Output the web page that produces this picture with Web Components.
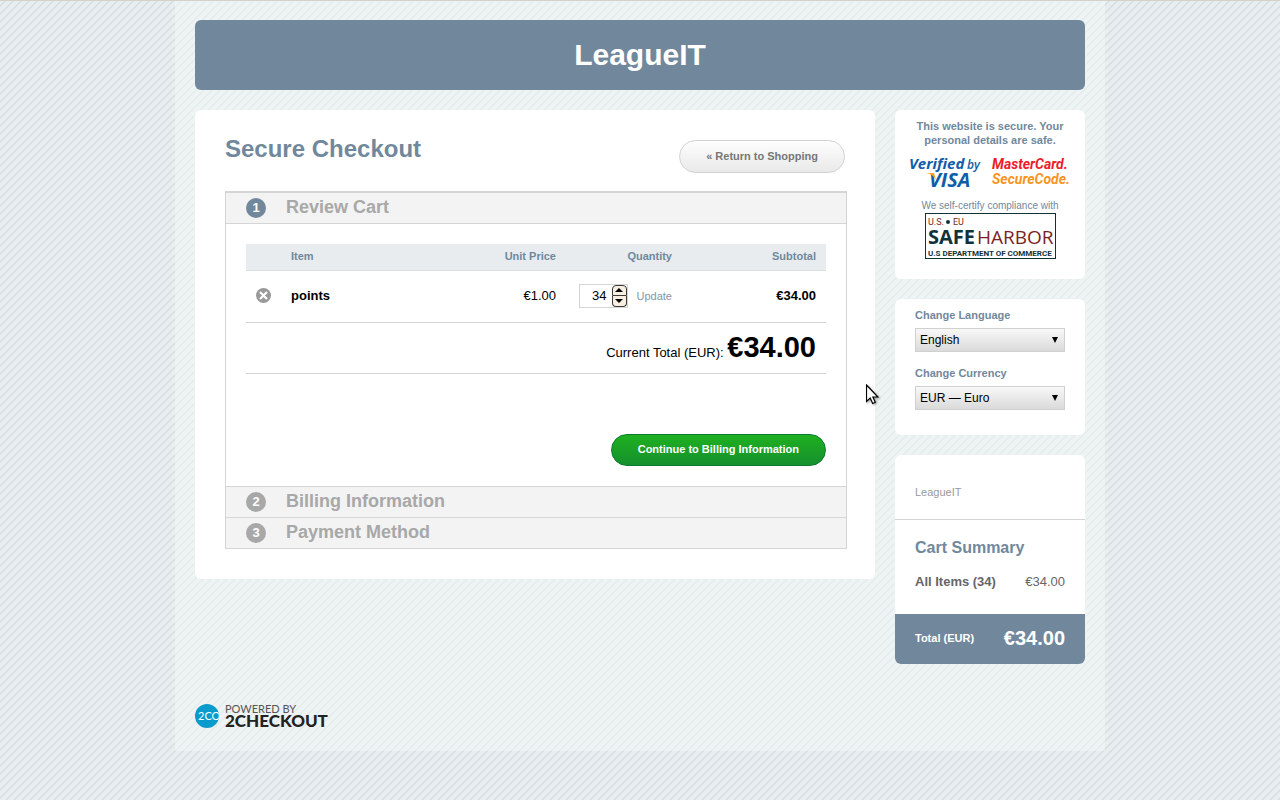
<!DOCTYPE html>
<html lang="en">
<head>
<meta charset="utf-8">
<title>LeagueIT - Secure Checkout</title>
<style>
  :root {
    --brand: #71889c;
    --line: #d4d5d6;
  }

  body {
    margin: 0;
    min-height: 100vh;
    box-sizing: border-box;
    border-top: 1px solid #d5d0c8;
    font: 13px/16px "Liberation Sans", Arial, sans-serif;
    color: #000;
    background: #e8edf0 linear-gradient(135deg,
      transparent 30%, #d5dcdf 34%, #d5dcdf 42%, transparent 46%,
      transparent 80%, #d5dcdf 84%, #d5dcdf 92%, transparent 96%) 0 0 / 8px 8px;
  }
</style>
</head>
<body>
  <checkout-page>
    <site-banner slot="banner">LeagueIT</site-banner>

    <checkout-panel slot="main">
      <checkout-step number="1" label="Review Cart" open>
        <cart-table></cart-table>
        <pill-button kind="primary">Continue to Billing Information</pill-button>
      </checkout-step>
      <checkout-step number="2" label="Billing Information"></checkout-step>
      <checkout-step number="3" label="Payment Method"></checkout-step>
    </checkout-panel>

    <trust-badges slot="side"></trust-badges>
    <locale-picker slot="side"></locale-picker>
    <cart-summary slot="side"></cart-summary>

    <powered-by slot="footer"></powered-by>
  </checkout-page>
  <mouse-pointer></mouse-pointer>

<script>
class CheckoutPage extends HTMLElement {
  constructor() {
    super();
    this.shadowDOM = this.attachShadow({ mode: "open" });
    this.shadowDOM.innerHTML = `
    <style>
      :host {
        display: block;
        box-sizing: border-box;
        max-width: 930px;
        margin: 0 auto;
        padding: 19px 20px 23px;
        background: rgba(244, 250, 247, 0.5);
      }
      .columns {
        display: flex;
        align-items: flex-start;
        gap: 20px;
        margin: 20px 0 40px;
      }
      main {
        flex: 1;
        min-width: 0;
      }
      aside {
        display: flex;
        flex-direction: column;
        gap: 20px;
        width: 190px;
      }
    </style>
    <slot name="banner"></slot>
    <div class="columns">
      <main><slot name="main"></slot></main>
      <aside><slot name="side"></slot></aside>
    </div>
    <slot name="footer"></slot>`;
  }
}

customElements.define("checkout-page", CheckoutPage);

class SiteBanner extends HTMLElement {
  constructor() {
    super();
    this.shadowDOM = this.attachShadow({ mode: "open" });
    this.shadowDOM.innerHTML = `
    <style>
      :host {
        display: block;
        padding: 17px 20px;
        border-radius: 6px;
        background: var(--brand);
        color: #fff;
        text-align: center;
      }
      h1 {
        margin: 0;
        font-size: 30px;
        line-height: 36px;
      }
    </style>
    <h1><slot></slot></h1>`;
  }
}

customElements.define("site-banner", SiteBanner);

class PillButton extends HTMLElement {
  constructor() {
    super();
    this.shadowDOM = this.attachShadow({ mode: "open" });
    this.shadowDOM.innerHTML = `
    <style>
      :host {
        display: block;
      }
      button {
        display: block;
        padding: 8px 26px 9px;
        border: 1px solid #d2d2d2;
        border-radius: 17px;
        background: linear-gradient(#fefefe, #e9e9e9);
        color: #777;
        font: bold 11px/14px "Liberation Sans", Arial, sans-serif;
        white-space: nowrap;
        cursor: pointer;
      }
      :host([kind="primary"]) button {
        padding: 7px 26px 9px;
        border-color: #0b7a30;
        background: linear-gradient(#1fb020, #15902e);
        color: #fff;
      }
    </style>
    <button type="button"><slot></slot></button>`;
  }
}

customElements.define("pill-button", PillButton);

class CheckoutPanel extends HTMLElement {
  constructor() {
    super();
    this.shadowDOM = this.attachShadow({ mode: "open" });
    this.shadowDOM.innerHTML = `
    <style>
      :host {
        display: block;
        padding: 30px;
        border-radius: 6px;
        background: #fff;
      }
      header {
        display: flex;
        justify-content: space-between;
        align-items: flex-start;
        margin-bottom: 18px;
      }
      h2 {
        margin: 0;
        color: var(--brand);
        font-size: 24px;
        line-height: 18px;
      }
      .steps {
        margin-right: -2px;
        border: 1px solid var(--line);
        border-top-width: 2px;
      }
    </style>
    <header>
      <h2>Secure Checkout</h2>
      <pill-button>« Return to Shopping</pill-button>
    </header>
    <div class="steps"><slot></slot></div>`;
  }
}

customElements.define("checkout-panel", CheckoutPanel);

class CheckoutStep extends HTMLElement {
  constructor() {
    super();
    this.shadowDOM = this.attachShadow({ mode: "open" });
  }

  connectedCallback() {
    this.render();
  }

  render() {
    this.shadowDOM.innerHTML = `
    <style>
      :host {
        display: block;
      }
      :host(:not(:first-child)) {
        border-top: 1px solid var(--line);
      }
      h3 {
        display: flex;
        align-items: center;
        gap: 20px;
        height: 30px;
        margin: 0;
        padding: 0 20px;
        background: #f3f3f3;
        color: #a8a8a8;
        font-size: 18px;
        line-height: 26px;
      }
      h3 span:last-child {
        padding-bottom: 2px;
      }
      .number {
        width: 20px;
        border-radius: 50%;
        background: #a8a8a8;
        color: #fff;
        font-size: 13px;
        line-height: 20px;
        text-align: center;
      }
      :host([open]) h3 {
        border-bottom: 1px solid var(--line);
      }
      :host([open]) .number {
        background: var(--brand);
      }
      .body {
        display: none;
      }
      :host([open]) .body {
        display: flex;
        flex-direction: column;
        align-items: flex-end;
        gap: 60px;
        padding: 20px;
      }
    </style>
    <h3><span class="number">${this.getAttribute("number")}</span><span>${this.getAttribute("label")}</span></h3>
    <div class="body"><slot></slot></div>`;
  }
}

customElements.define("checkout-step", CheckoutStep);

class QuantityField extends HTMLElement {
  constructor() {
    super();
    this.shadowDOM = this.attachShadow({ mode: "open" });
    this.shadowDOM.innerHTML = `
    <style>
      :host {
        display: flex;
        box-sizing: border-box;
        width: 49px;
        height: 24px;
        border: 1px solid #d4d5d6;
        background: #fff;
      }
      input {
        flex: 1;
        min-width: 0;
        padding: 0 5px 0 0;
        border: 0;
        background: none;
        font: 13px/22px "Liberation Sans", Arial, sans-serif;
        text-align: right;
        appearance: textfield;
      }
      input::-webkit-inner-spin-button {
        display: none;
      }
      .spin {
        display: flex;
        flex-direction: column;
        width: 15px;
      }
      button {
        display: flex;
        flex: 1;
        align-items: center;
        justify-content: center;
        padding: 0;
        border: 1px solid #3c3a37;
        border-radius: 4px 4px 0 0;
        background: #f8efe3;
      }
      button:last-child {
        border-top: 0;
        border-radius: 0 0 4px 4px;
      }
    </style>
    <input type="number" value="34" min="0" aria-label="Quantity">
    <div class="spin">
      <button type="button" aria-label="More"><svg width="8" height="4"><path d="M4 0L8 4H0z"/></svg></button>
      <button type="button" aria-label="Less"><svg width="8" height="4"><path d="M0 0H8L4 4z"/></svg></button>
    </div>`;
    const input = this.shadowDOM.querySelector("input");
    const [more, less] = this.shadowDOM.querySelectorAll("button");
    more.addEventListener("click", () => input.stepUp());
    less.addEventListener("click", () => input.stepDown());
  }
}

customElements.define("quantity-field", QuantityField);

class CartTable extends HTMLElement {
  constructor() {
    super();
    this.shadowDOM = this.attachShadow({ mode: "open" });
    this.shadowDOM.innerHTML = `
    <style>
      :host {
        display: block;
        width: 100%;
      }
      table {
        width: 100%;
        border-collapse: separate;
        border-spacing: 0;
        table-layout: fixed;
      }
      th, td {
        padding: 0 10px 2px;
        border-bottom: 1px solid var(--line);
        text-align: right;
      }
      th {
        height: 24px;
        border-color: #dcdfe1;
        background: #e8ecef;
        color: var(--brand);
        font-size: 11px;
        line-height: 14px;
      }
      td {
        height: 49px;
      }
      .left {
        text-align: left;
      }
      .icon { width: 15px; }
      .price { width: 100px; }
      .quantity { width: 96px; }
      .subtotal { width: 124px; }
      .remove {
        display: block;
        padding: 0;
        border: 0;
        background: none;
      }
      .remove svg {
        display: block;
      }
      .edit {
        display: flex;
        align-items: center;
        justify-content: flex-end;
        gap: 9px;
      }
      a {
        color: #8496a7;
        font-size: 11px;
        text-decoration: none;
      }
      tfoot td {
        height: 48px;
      }
      .total {
        font-size: 29px;
        line-height: 32px;
      }
    </style>
    <table>
      <thead>
        <tr>
          <th class="icon"></th>
          <th class="left">Item</th>
          <th class="price">Unit Price</th>
          <th class="quantity">Quantity</th>
          <th class="subtotal">Subtotal</th>
        </tr>
      </thead>
      <tbody>
        <tr>
          <td>
            <button class="remove" type="button" aria-label="Remove">
              <svg width="15" height="15" viewBox="0 0 15 15">
                <circle cx="7.5" cy="7.5" r="7.5" fill="#999"/>
                <path d="M4 4l7 7M11 4l-7 7" stroke="#fff" stroke-width="2.2"/>
              </svg>
            </button>
          </td>
          <td class="left"><b>points</b></td>
          <td>€1.00</td>
          <td><div class="edit"><quantity-field></quantity-field><a href="#update">Update</a></div></td>
          <td><b>€34.00</b></td>
        </tr>
      </tbody>
      <tfoot>
        <tr><td colspan="5">Current Total (EUR): <b class="total">€34.00</b></td></tr>
      </tfoot>
    </table>`;
  }
}

customElements.define("cart-table", CartTable);

class SideCard extends HTMLElement {
  constructor() {
    super();
    this.shadowDOM = this.attachShadow({ mode: "open" });
    this.shadowDOM.innerHTML = `
    <style>
      :host {
        display: block;
        overflow: hidden;
        border-radius: 6px;
        background: #fff;
      }
    </style>
    <slot></slot>`;
  }
}

customElements.define("side-card", SideCard);

class TrustBadges extends HTMLElement {
  constructor() {
    super();
    this.shadowDOM = this.attachShadow({ mode: "open" });
    this.shadowDOM.innerHTML = `
    <style>
      :host {
        display: block;
      }
      .content {
        display: flex;
        flex-direction: column;
        align-items: center;
        padding: 9px 14px 20px;
        color: var(--brand);
        text-align: center;
      }
      strong {
        font-size: 11px;
        line-height: 14px;
      }
      .cards {
        display: flex;
        gap: 8px;
        margin: 8px 0 10px;
      }
      svg {
        display: block;
        overflow: visible;
      }
      small {
        font-size: 10px;
        line-height: 14px;
      }
      .grotesque {
        font-family: Roboto, "Liberation Sans", sans-serif;
        font-weight: bold;
      }
      .humanist {
        font-family: "Open Sans", "Noto Sans", sans-serif;
      }
    </style>
    <side-card>
      <div class="content">
        <strong>This website is secure. Your personal details are safe.</strong>
        <div class="cards">
          <svg width="75" height="34" viewBox="0 0 75 34" fill="#125ca8">
            <text class="humanist" x="0" y="14" font-size="15" font-weight="bold" font-style="italic">Verified</text>
            <text class="humanist" x="58" y="14" font-size="12" font-weight="600" font-style="italic">by</text>
            <text class="humanist" x="20" y="32" font-size="20" font-weight="bold" font-style="italic">VISA</text>
            <path d="M17 18h8l2 7q-3-6-10-7z" fill="#f8a51b"/>
          </svg>
          <svg width="79" height="34" viewBox="0 0 79 34" font-style="italic">
            <text class="grotesque" x="0" y="14" font-size="14" fill="#ec1c2a">MasterCard.</text>
            <text class="grotesque" x="0" y="29" font-size="14" fill="#f7941e">SecureCode.</text>
          </svg>
        </div>
        <small>We self-certify compliance with</small>
        <svg width="131" height="46" viewBox="0 0 131 46" fill="#12323a">
          <rect x="0.5" y="0.5" width="130" height="45" fill="#fff" stroke="#12323a"/>
          <text x="3" y="12" font-family="Roboto, sans-serif" font-size="9" fill="#7c1f27">U.S.</text>
          <circle cx="23" cy="9" r="2"/>
          <text x="28" y="12" font-family="Roboto, sans-serif" font-size="9" fill="#7c1f27">EU</text>
          <text class="humanist" x="3" y="31" font-size="20" font-weight="bold">SAFE</text>
          <text class="humanist" x="52" y="31" font-size="19" fill="#7c1f27">HARBOR</text>
          <text class="grotesque" x="3" y="43" font-size="8">U.S DEPARTMENT OF COMMERCE</text>
        </svg>
      </div>
    </side-card>`;
  }
}

customElements.define("trust-badges", TrustBadges);

class LocalePicker extends HTMLElement {
  constructor() {
    super();
    this.shadowDOM = this.attachShadow({ mode: "open" });
    this.shadowDOM.innerHTML = `
    <style>
      :host {
        display: block;
      }
      form {
        display: flex;
        flex-direction: column;
        gap: 14px;
        padding: 9px 20px 25px;
      }
      label {
        display: block;
        margin-bottom: 6px;
        color: var(--brand);
        font-size: 11px;
        font-weight: bold;
        line-height: 14px;
      }
      .select {
        display: grid;
        align-items: center;
      }
      .select > * {
        grid-area: 1 / 1;
      }
      select {
        width: 100%;
        height: 24px;
        padding: 0 20px 0 4px;
        border: 1px solid #d0d0d0;
        border-radius: 0;
        background: linear-gradient(#f8f8f8, #dadada);
        color: #000;
        font: 12px/16px "Liberation Sans", Arial, sans-serif;
        appearance: none;
      }
      svg {
        justify-self: end;
        margin-right: 7px;
        pointer-events: none;
      }
    </style>
    <side-card>
      <form>
        <div>
          <label for="language">Change Language</label>
          <div class="select">
            <select id="language"><option>English</option></select>
            <svg width="6" height="6"><path d="M0 0H6L3 6z"/></svg>
          </div>
        </div>
        <div>
          <label for="currency">Change Currency</label>
          <div class="select">
            <select id="currency"><option>EUR — Euro</option></select>
            <svg width="6" height="6"><path d="M0 0H6L3 6z"/></svg>
          </div>
        </div>
      </form>
    </side-card>`;
  }
}

customElements.define("locale-picker", LocalePicker);

class CartSummary extends HTMLElement {
  constructor() {
    super();
    this.shadowDOM = this.attachShadow({ mode: "open" });
    this.shadowDOM.innerHTML = `
    <style>
      :host {
        display: block;
      }
      .vendor {
        padding: 30px 20px 20px;
        border-bottom: 1px solid var(--line);
        color: #999;
        font-size: 11px;
        line-height: 14px;
      }
      .items {
        padding: 18px 20px 24px;
        color: #666;
      }
      h4 {
        margin: 0 0 16px;
        color: var(--brand);
        font-size: 16px;
        line-height: 20px;
      }
      .row {
        display: flex;
        align-items: center;
        justify-content: space-between;
      }
      .total {
        padding: 12px 20px 14px;
        background: var(--brand);
        color: #fff;
        font-size: 11px;
        font-weight: bold;
        line-height: 24px;
      }
      .total span:last-child {
        font-size: 20px;
      }
    </style>
    <side-card>
      <div class="vendor">LeagueIT</div>
      <div class="items">
        <h4>Cart Summary</h4>
        <div class="row"><b>All Items (34)</b><span>€34.00</span></div>
      </div>
      <div class="row total"><span>Total (EUR)</span><span>€34.00</span></div>
    </side-card>`;
  }
}

customElements.define("cart-summary", CartSummary);

class PoweredBy extends HTMLElement {
  constructor() {
    super();
    this.shadowDOM = this.attachShadow({ mode: "open" });
    this.shadowDOM.innerHTML = `
    <style>
      :host {
        display: flex;
      }
      svg {
        display: block;
        font-family: Lato, "Open Sans", sans-serif;
      }
    </style>
    <svg width="134" height="24" viewBox="0 0 134 24">
      <clipPath id="disc"><circle cx="12" cy="12" r="12"/></clipPath>
      <g clip-path="url(#disc)">
        <rect width="24" height="24" fill="#0a9bcd"/>
        <text x="3" y="16" font-size="11" fill="#fff">2CO</text>
      </g>
      <text x="30" y="9" font-size="11" fill="#555">POWERED BY</text>
      <text x="30" y="23" font-size="17" font-weight="900" fill="#222">2CHECKOUT</text>
    </svg>`;
  }
}

customElements.define("powered-by", PoweredBy);

class MousePointer extends HTMLElement {
  constructor() {
    super();
    this.shadowDOM = this.attachShadow({ mode: "open" });
    this.shadowDOM.innerHTML = `
    <style>
      :host {
        position: absolute;
        top: 384px;
        left: calc(50% + 226px);
        pointer-events: none;
      }
      svg {
        display: block;
        filter: drop-shadow(1px 1px 1px rgba(0, 0, 0, 0.4));
      }
    </style>
    <svg width="14" height="22" viewBox="0 0 14 22">
      <path d="M0.5 1v16.5l3.7-3.5 2.5 5.5 2.6-1.2-2.4-5.3h5z" fill="#fff" stroke="#000" stroke-width="1.2"/>
    </svg>`;
  }
}

customElements.define("mouse-pointer", MousePointer);
</script>
</body>
</html>
